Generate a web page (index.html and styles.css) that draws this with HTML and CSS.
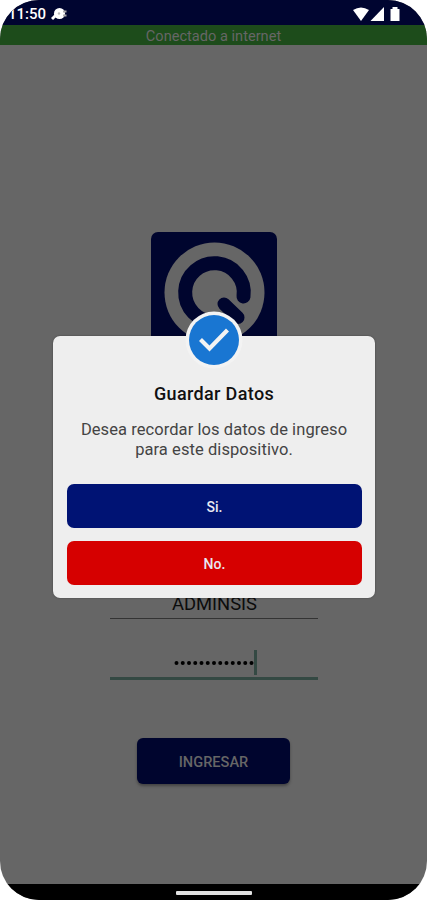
FILE: index.html
```html
<!DOCTYPE html>
<html lang="es">
<head>
    <meta charset="utf-8"/>
    <title>Guardar Datos</title>
    <link rel="stylesheet" href="styles.css">
</head>
<body>
    <div class="phone">
        <header class="status">
            <span class="time">11:50</span>
            <svg class="notif" width="18" height="14" viewBox="0 0 18 14">
                <path d="M1 12 L5 8" stroke="#fff" stroke-width="3"/>
                <circle cx="8.500" cy="6.500" r="5.500" fill="#fff"/>
                <circle cx="8" cy="6.500" r="1.200" fill="#bbb"/>
                <path d="M12 4.500h3.500M12 8.500h3.500" stroke="#aaa" stroke-width="2"/>
            </svg>
            <svg class="signals" width="50" height="16" viewBox="0 0 50 16">
                <path d="M1 4Q9-1 17 4L9 15Z" fill="#fff"/>
                <path d="M18.500 15 32 1V15Z" fill="#fff"/>
                <path d="M38.500 3h2V1h5v2h2v12h-9Z" fill="#fff"/>
            </svg>
        </header>
        <div class="connection">Conectado a internet</div>

        <main class="login">
            <svg class="logo" width="126" height="126" viewBox="0 0 126 126">
                <rect width="126" height="126" rx="7" fill="#00052e"/>
                <circle cx="63.500" cy="60.500" r="50" fill="#666"/>
                <path d="M92.500 64.500A29.300 29.300 0 1 0 63.500 89.800" fill="none" stroke="#00052e" stroke-width="14" stroke-linecap="round"/>
                <path d="M73 72 87 85.500" stroke="#00052e" stroke-width="13" stroke-linecap="round"/>
            </svg>
            <div class="field user">ADMINSIS</div>
            <div class="field password">
                <svg width="80" height="6" viewBox="0 0 80 6">
                    <path d="M2.500 3H78" stroke="#000" stroke-width="4" stroke-linecap="round" stroke-dasharray="0 6.250"/>
                </svg>
                <span class="caret"></span>
            </div>
            <button class="enter">INGRESAR</button>
        </main>

        <footer class="nav"><span class="home"></span></footer>

        <section class="dialog">
            <svg class="badge" width="58" height="58" viewBox="0 0 58 58">
                <circle cx="29" cy="29" r="28.500" fill="#f3f3f3"/>
                <circle cx="29" cy="29" r="25" fill="#1976d2"/>
                <path d="M15.500 28.500 24.500 37.500 42.500 19" fill="none" stroke="#f3f3f3" stroke-width="4.200"/>
            </svg>
            <h1>Guardar Datos</h1>
            <p>Desea recordar los datos de ingreso<br>para este dispositivo.</p>
            <button class="yes">Si.</button>
            <button class="no">No.</button>
        </section>
    </div>
</body>
</html>
```
FILE: styles.css
```css
*{
    margin: 0;
    padding: 0;
    box-sizing: border-box;
}
body{
    background: white;
    font-family: Roboto, sans-serif;
}
button{
    display: block;
    border: none;
    font-family: inherit;
    font-weight: 500;
}
.phone{
    position: relative;
    display: flex;
    flex-direction: column;
    width: 427px;
    height: 900px;
    border-radius: 39px;
    overflow: hidden;
    background: #666;
}
.status{
    display: flex;
    align-items: center;
    height: 25px;
    padding: 2px 25px 0 8px;
    background: #000530;
    color: white;
}
.time{
    width: 38px;
    font-size: 15px;
    font-weight: 500;
}
.notif{
    margin-left: 5px;
}
.signals{
    margin-left: auto;
}
.connection{
    height: 20px;
    padding-top: 1px;
    background: #1d4c1b;
    color: #666;
    font-size: 14.6px;
    line-height: 20px;
    text-align: center;
}
.login{
    flex: 1;
    display: flex;
    flex-direction: column;
    align-items: center;
    padding-top: 187px;
}
.field{
    display: flex;
    justify-content: center;
    width: 208px;
}
.user{
    height: 31px;
    margin-top: 230px;
    padding: 6px 0 0 2px;
    border-bottom: 1px solid #333;
    color: #0c0c0c;
    font-size: 18.4px;
    line-height: 20px;
}
.password{
    align-items: center;
    height: 61px;
    padding-top: 30px;
    padding-left: 4px;
    border-bottom: 3px solid #344943;
}
.password svg{
    margin-top: -1px;
}
.caret{
    width: 3px;
    height: 25px;
    margin-top: -1px;
    background: #344943;
}
.enter{
    width: 153px;
    height: 46px;
    margin-top: 58px;
    padding-top: 2px;
    border-radius: 6px;
    background: #00052e;
    box-shadow: 0 2px 3px rgba(0, 0, 0, 0.35);
    color: #666;
    font-size: 14.6px;
}
.nav{
    display: flex;
    justify-content: center;
    height: 16px;
    padding-top: 7px;
    background: black;
}
.home{
    width: 76px;
    height: 4px;
    border-radius: 1px;
    background: #e2e2e2;
}
/* modal sits over the login form */
.dialog{
    position: absolute;
    top: 336px;
    left: 53px;
    width: 322px;
    height: 262px;
    padding: 46px 13px 0;
    border-radius: 7px;
    background: #eee;
    box-shadow: 0 0 2px rgba(0, 0, 0, 0.4);
    text-align: center;
}
.badge{
    position: absolute;
    top: -25px;
    left: 132px;
}
.dialog h1{
    color: #111;
    font-size: 18px;
    font-weight: 500;
    line-height: 24px;
    letter-spacing: 0.35px;
}
.dialog p{
    margin-top: 14px;
    color: #444;
    font-size: 16.5px;
    line-height: 20px;
    letter-spacing: 0.07px;
}
.dialog button{
    width: 295px;
    height: 44px;
    margin-left: 1px;
    padding-top: 2px;
    border-radius: 7px;
    color: #e8e8f2;
    font-size: 14px;
}
.dialog .yes{
    margin-top: 24px;
    background: #001374;
}
.dialog .no{
    margin-top: 13px;
    background: #d60000;
}
```
